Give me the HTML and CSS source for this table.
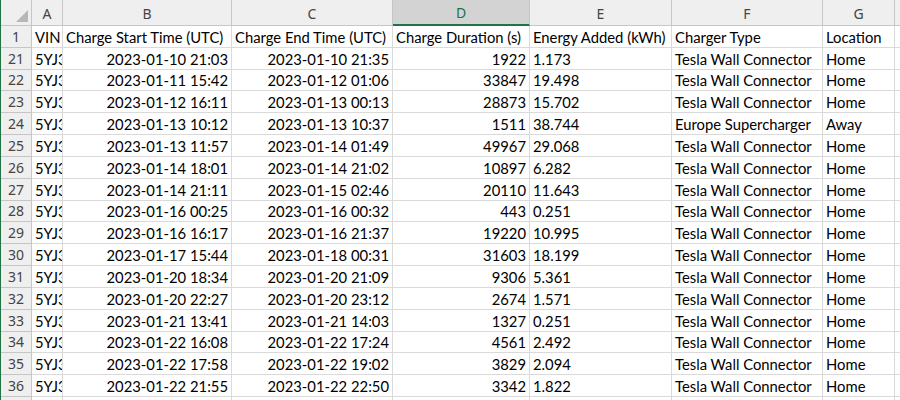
FILE: index.html
```html
<!DOCTYPE html>
<html>
<head>
<meta charset="utf-8">
<link rel="stylesheet" href="styles.css">
</head>
<body>
<div class="sheet">
  <div class="corner"><span class="tri"></span></div>
  <div class="ch">A</div><div class="ch">B</div><div class="ch">C</div><div class="ch sel">D</div><div class="ch">E</div><div class="ch">F</div><div class="ch">G</div><div class="ch"></div>

  <div class="rh">1</div><div class="c">VIN</div><div class="c">Charge Start Time (UTC)</div><div class="c">Charge End Time (UTC)</div><div class="c">Charge Duration (s)</div><div class="c">Energy Added (kWh)</div><div class="c">Charger Type</div><div class="c">Location</div><div class="c"></div>

  <div class="rh">21</div><div class="c vin">5YJ3</div><div class="c r">2023-01-10 21:03</div><div class="c r">2023-01-10 21:35</div><div class="c r">1922</div><div class="c">1.173</div><div class="c">Tesla Wall Connector</div><div class="c">Home</div><div class="c"></div>
  <div class="rh">22</div><div class="c vin">5YJ3</div><div class="c r">2023-01-11 15:42</div><div class="c r">2023-01-12 01:06</div><div class="c r">33847</div><div class="c">19.498</div><div class="c">Tesla Wall Connector</div><div class="c">Home</div><div class="c"></div>
  <div class="rh">23</div><div class="c vin">5YJ3</div><div class="c r">2023-01-12 16:11</div><div class="c r">2023-01-13 00:13</div><div class="c r">28873</div><div class="c">15.702</div><div class="c">Tesla Wall Connector</div><div class="c">Home</div><div class="c"></div>
  <div class="rh">24</div><div class="c vin">5YJ3</div><div class="c r">2023-01-13 10:12</div><div class="c r">2023-01-13 10:37</div><div class="c r">1511</div><div class="c">38.744</div><div class="c">Europe Supercharger</div><div class="c">Away</div><div class="c"></div>
  <div class="rh">25</div><div class="c vin">5YJ3</div><div class="c r">2023-01-13 11:57</div><div class="c r">2023-01-14 01:49</div><div class="c r">49967</div><div class="c">29.068</div><div class="c">Tesla Wall Connector</div><div class="c">Home</div><div class="c"></div>
  <div class="rh">26</div><div class="c vin">5YJ3</div><div class="c r">2023-01-14 18:01</div><div class="c r">2023-01-14 21:02</div><div class="c r">10897</div><div class="c">6.282</div><div class="c">Tesla Wall Connector</div><div class="c">Home</div><div class="c"></div>
  <div class="rh">27</div><div class="c vin">5YJ3</div><div class="c r">2023-01-14 21:11</div><div class="c r">2023-01-15 02:46</div><div class="c r">20110</div><div class="c">11.643</div><div class="c">Tesla Wall Connector</div><div class="c">Home</div><div class="c"></div>
  <div class="rh">28</div><div class="c vin">5YJ3</div><div class="c r">2023-01-16 00:25</div><div class="c r">2023-01-16 00:32</div><div class="c r">443</div><div class="c">0.251</div><div class="c">Tesla Wall Connector</div><div class="c">Home</div><div class="c"></div>
  <div class="rh">29</div><div class="c vin">5YJ3</div><div class="c r">2023-01-16 16:17</div><div class="c r">2023-01-16 21:37</div><div class="c r">19220</div><div class="c">10.995</div><div class="c">Tesla Wall Connector</div><div class="c">Home</div><div class="c"></div>
  <div class="rh">30</div><div class="c vin">5YJ3</div><div class="c r">2023-01-17 15:44</div><div class="c r">2023-01-18 00:31</div><div class="c r">31603</div><div class="c">18.199</div><div class="c">Tesla Wall Connector</div><div class="c">Home</div><div class="c"></div>
  <div class="rh">31</div><div class="c vin">5YJ3</div><div class="c r">2023-01-20 18:34</div><div class="c r">2023-01-20 21:09</div><div class="c r">9306</div><div class="c">5.361</div><div class="c">Tesla Wall Connector</div><div class="c">Home</div><div class="c"></div>
  <div class="rh">32</div><div class="c vin">5YJ3</div><div class="c r">2023-01-20 22:27</div><div class="c r">2023-01-20 23:12</div><div class="c r">2674</div><div class="c">1.571</div><div class="c">Tesla Wall Connector</div><div class="c">Home</div><div class="c"></div>
  <div class="rh">33</div><div class="c vin">5YJ3</div><div class="c r">2023-01-21 13:41</div><div class="c r">2023-01-21 14:03</div><div class="c r">1327</div><div class="c">0.251</div><div class="c">Tesla Wall Connector</div><div class="c">Home</div><div class="c"></div>
  <div class="rh">34</div><div class="c vin">5YJ3</div><div class="c r">2023-01-22 16:08</div><div class="c r">2023-01-22 17:24</div><div class="c r">4561</div><div class="c">2.492</div><div class="c">Tesla Wall Connector</div><div class="c">Home</div><div class="c"></div>
  <div class="rh">35</div><div class="c vin">5YJ3</div><div class="c r">2023-01-22 17:58</div><div class="c r">2023-01-22 19:02</div><div class="c r">3829</div><div class="c">2.094</div><div class="c">Tesla Wall Connector</div><div class="c">Home</div><div class="c"></div>
  <div class="rh">36</div><div class="c vin">5YJ3</div><div class="c r">2023-01-22 21:55</div><div class="c r">2023-01-22 22:50</div><div class="c r">3342</div><div class="c">1.822</div><div class="c">Tesla Wall Connector</div><div class="c">Home</div><div class="c"></div>
  <div class="rh">37</div><div class="c"></div><div class="c"></div><div class="c"></div><div class="c"></div><div class="c"></div><div class="c"></div><div class="c"></div><div class="c"></div>
</div>
</body>
</html>
```

FILE: styles.css
```css
html, body {
  margin: 0;
  padding: 0;
  background: #ffffff;
  overflow: hidden;
}

.sheet {
  display: grid;
  grid-template-columns: 31px 31px 169px 161px 137px 142px 151px 72px 1fr;
  grid-template-rows: 26px;
  grid-auto-rows: 21.83px;
  border-left: 1px solid #217346;
  height: 400px;
  overflow: hidden;
  font-family: Lato, "Liberation Sans", sans-serif;
  font-size: 14.8px;
  color: #000;
}

.corner,
.ch,
.rh {
  box-sizing: border-box;
  background: #efefef;
  border-right: 1px solid #c6c6c6;
  border-bottom: 1px solid #c6c6c6;
  font-family: "Noto Sans", sans-serif;
  font-size: 14px;
  color: #444;
}

.corner {
  position: relative;
}

.tri {
  position: absolute;
  right: 3px;
  bottom: 3px;
  width: 0;
  height: 0;
  border-left: 12px solid transparent;
  border-bottom: 12px solid #b7b7b7;
}

.ch {
  display: flex;
  align-items: center;
  justify-content: center;
  padding-top: 1px;
}

.ch.sel {
  background: #d3d3d3;
  color: #217346;
  border-bottom: 2px solid #217346;
}

.rh {
  display: flex;
  align-items: flex-end;
  justify-content: center;
  padding-bottom: 1px;
  line-height: 18px;
}

.c {
  box-sizing: border-box;
  border-right: 1px solid #dadada;
  border-bottom: 1px solid #dadada;
  display: flex;
  align-items: flex-end;
  padding: 0 3px 1px 3px;
  line-height: 18px;
  white-space: nowrap;
  overflow: hidden;
}

.c.r {
  justify-content: flex-end;
}

.c.vin {
  padding-right: 0;
}
```
